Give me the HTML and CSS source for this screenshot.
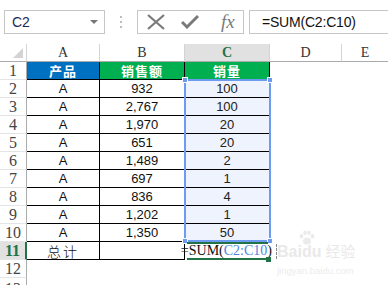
FILE: index.html
```html
<!DOCTYPE html>
<html>
<head>
<meta charset="utf-8">
<link rel="stylesheet" href="styles.css">
</head>
<body>
<div class="toolbar">
  <div class="namebox"><span class="name">C2</span><span class="caret"></span></div>
  <div class="dots"><i></i><i></i><i></i></div>
  <div class="btns">
    <svg class="ico-x" width="20" height="18" viewBox="0 0 20 18"><path d="M2 2 L18 16 M18 2 L2 16" stroke="#7a7a7a" stroke-width="2.2" fill="none"/></svg>
    <svg class="ico-ok" width="18" height="16" viewBox="0 0 18 16"><path d="M1 8 L6 13 L17 2" stroke="#7a7a7a" stroke-width="3" fill="none"/></svg>
    <span class="fx">fx</span>
  </div>
  <div class="formula">=SUM(C2:C10)</div>
</div>
<div class="wrap">
<div class="sheet">
  <div class="corner"><span class="tri"></span></div>
  <div class="ch">A</div><div class="ch">B</div><div class="ch ch-sel">C</div><div class="ch">D</div><div class="ch ch-last">E</div>

  <div class="rh">1</div><div class="c hd blue">产品</div><div class="c hd green">销售额</div><div class="c hd green">销量</div><div class="e"></div><div class="e"></div>
  <div class="rh">2</div><div class="c">A</div><div class="c">932</div><div class="c s">100</div><div class="e"></div><div class="e"></div>
  <div class="rh">3</div><div class="c">A</div><div class="c">2,767</div><div class="c s">100</div><div class="e"></div><div class="e"></div>
  <div class="rh">4</div><div class="c">A</div><div class="c">1,970</div><div class="c s">20</div><div class="e"></div><div class="e"></div>
  <div class="rh">5</div><div class="c">A</div><div class="c">651</div><div class="c s">20</div><div class="e"></div><div class="e"></div>
  <div class="rh">6</div><div class="c">A</div><div class="c">1,489</div><div class="c s">2</div><div class="e"></div><div class="e"></div>
  <div class="rh">7</div><div class="c">A</div><div class="c">697</div><div class="c s">1</div><div class="e"></div><div class="e"></div>
  <div class="rh">8</div><div class="c">A</div><div class="c">836</div><div class="c s">4</div><div class="e"></div><div class="e"></div>
  <div class="rh">9</div><div class="c">A</div><div class="c">1,202</div><div class="c s">1</div><div class="e"></div><div class="e"></div>
  <div class="rh">10</div><div class="c">A</div><div class="c">1,350</div><div class="c s">50</div><div class="e"></div><div class="e"></div>
  <div class="rh rh-sel">11</div><div class="c sum">总计</div><div class="c"></div><div class="c edit"><span class="ftxt">=SUM(<b>C2:C10</b>)</span><span class="cursor"></span></div><div class="e"></div><div class="e"></div>
  <div class="rh">12</div><div class="e"></div><div class="e"></div><div class="e"></div><div class="e"></div><div class="e"></div>
  <div class="rh rh-cut">13</div><div class="e"></div><div class="e"></div><div class="e"></div><div class="e"></div><div class="e"></div>
</div>
<div class="overlay">
  <div class="selbox"><i class="h tl"></i><i class="h tr"></i><i class="h bl"></i><i class="h br"></i></div>
  <div class="editbox"><i class="g br"></i></div>
</div>
<div class="wm">
  <svg class="paw" width="16" height="15" viewBox="0 0 20 19"><ellipse cx="3" cy="8" rx="2.3" ry="2.8" fill="#ebebeb"/><ellipse cx="7.5" cy="3.5" rx="2.3" ry="2.8" fill="#ebebeb"/><ellipse cx="12.5" cy="3.5" rx="2.3" ry="2.8" fill="#ebebeb"/><ellipse cx="17" cy="8" rx="2.3" ry="2.8" fill="#ebebeb"/><ellipse cx="10" cy="14" rx="5" ry="4.5" fill="#ebebeb"/></svg>
  <div class="wm1"><span>Bai</span><span class="du">du</span><span class="jy">经验</span></div>
  <div class="wm2">jingyan.baidu.com</div>
</div>
</div>
</body>
</html>
```
FILE: styles.css
```css
* { box-sizing: border-box; }
html, body { margin: 0; padding: 0; background: #fff; }
body { width: 388px; height: 285px; overflow: hidden; font-family: "Liberation Sans", Arial, sans-serif; }

.toolbar { height: 44px; display: flex; align-items: flex-start; padding-top: 10px; }
.namebox { margin-left: 4px; width: 101px; height: 24px; border: 1px solid #c6c6c6; display: flex; align-items: center; justify-content: space-between; padding: 0 6px 0 7px; }
.name { font-size: 14px; color: #1a2a55; }
.caret { width: 0; height: 0; border-left: 4px solid transparent; border-right: 4px solid transparent; border-top: 4px solid #777; }
.dots { width: 32px; height: 24px; display: flex; flex-direction: column; align-items: center; justify-content: center; gap: 3px; }
.dots i { display: block; width: 2px; height: 2px; background: #bdbdbd; }
.btns { width: 107px; height: 24px; border: 1px solid #c6c6c6; display: flex; align-items: center; padding-left: 6px; }
.ico-x { margin-left: 2px; }
.ico-ok { margin-left: 15px; }
.fx { margin-left: 22px; font-family: "Liberation Serif", serif; font-style: italic; font-size: 19px; color: #7a7a7a; line-height: 1; margin-top: -2px; }
.formula { margin-left: 5px; flex: 1; height: 24px; border: 1px solid #c6c6c6; border-right: none; font-size: 14px; color: #111; display: flex; align-items: center; padding-left: 12px; letter-spacing: -0.2px; }

.wrap { position: relative; display: grid; }
.sheet, .overlay { grid-area: 1 / 1; display: grid; grid-template-columns: 27px 73px 85px 85px 72px 46px; grid-template-rows: repeat(14, 18px); }
.overlay { pointer-events: none; }
.corner { border-right: 1px solid #d4d4d4; border-bottom: 1px solid #ababab; position: relative; }
.tri { position: absolute; right: 3px; bottom: 3px; width: 0; height: 0; border-left: 10px solid transparent; border-bottom: 10px solid #d3d3d3; }
.ch { border-right: 1px solid #d4d4d4; border-bottom: 1px solid #ababab; font-family: "Liberation Serif", serif; font-size: 14px; color: #333; display: flex; align-items: center; justify-content: center; }
.ch-last { border-right: none; }
.ch-sel { background: #e1e1e1; color: #217346; font-weight: bold; }
.rh { border-right: 1px solid #ababab; border-bottom: 1px solid #e4e4e4; font-family: "Liberation Serif", serif; font-size: 16px; color: #444; display: flex; align-items: center; justify-content: center; }
.rh-sel { background: #e1e1e1; color: #217346; font-weight: bold; border-right: 2px solid #217346; }
.rh-cut { align-items: flex-start; padding-top: 2px; }

.c { border-right: 1px solid #000; border-bottom: 1px solid #000; display: flex; align-items: center; justify-content: center; font-size: 13px; color: #111; white-space: nowrap; }
.hd { color: #fff; font-weight: bold; font-family: "Noto Sans CJK SC", sans-serif; font-size: 13px; letter-spacing: 1px; }
.blue { background: #0070c0; }
.green { background: #00b050; }
.s { background: #eef3fd; color: #222; }
.sum { font-family: "Noto Sans CJK SC", sans-serif; font-weight: 300; font-size: 14px; letter-spacing: 2px; }
.edit { border: none; justify-content: flex-end; position: relative; }
.ftxt { font-family: "Liberation Serif", serif; font-size: 14px; color: #111; margin-right: -2px; }
.ftxt b { font-weight: normal; color: #4f86e0; }
.cursor { position: absolute; right: -7px; top: 2px; height: 15px; border-left: 1px dashed #888; }

.selbox { grid-column: 4; grid-row: 3 / 12; margin: -1px -1px 0 -1px; border: 2px solid #6d9bf0; position: relative; }
.h { position: absolute; width: 6px; height: 6px; background: #6d9bf0; border: 1px solid #fff; }
.h.tl { left: -4px; top: -4px; }
.h.tr { right: -4px; top: -4px; }
.h.bl { left: -4px; bottom: -4px; }
.h.br { right: -4px; bottom: -4px; }
.editbox { grid-column: 4; grid-row: 12; border-top: 2px solid #217346; border-bottom: 2px solid #217346; margin: 0 2px; position: relative; }
.g { position: absolute; width: 5px; height: 5px; background: #217346; }
.g.br { right: -3px; bottom: -4px; }

.wm { position: absolute; left: 277px; top: 186px; width: 90px; pointer-events: none; white-space: nowrap; }
.paw { display: block; margin-left: 22px; }
.wm1 { font-size: 16px; font-weight: bold; font-family: "Liberation Sans", sans-serif; display: flex; align-items: baseline; color: #e9e9e9; line-height: 1; margin-top: -2px; }
.du { margin-right: 4px; }
.jy { font-family: "Noto Sans CJK SC", sans-serif; font-size: 15px; font-weight: 400; }
.wm2 { font-size: 9.5px; margin-top: 5px; color: #ececec; }
```
